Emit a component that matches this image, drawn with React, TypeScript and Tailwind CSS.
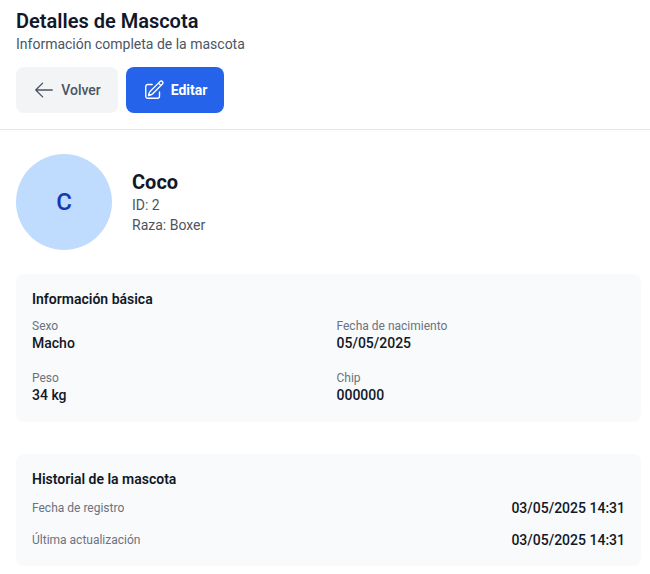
import { HiOutlineArrowLeft, HiOutlinePencilSquare } from "react-icons/hi2"

function Field({ label, value }: { label: string; value: string }) {
  return (
    <div>
      <p className="text-xs leading-4 text-[#6b7280]">{label}</p>
      <p className="-mt-px text-sm leading-5 font-medium text-[#111827]">{value}</p>
    </div>
  )
}

function HistoryRow({ label, value }: { label: string; value: string }) {
  return (
    <div className="flex items-center justify-between">
      <span className="text-xs leading-4 text-[#6b7280]">{label}</span>
      <span className="text-sm leading-5 font-medium text-[#111827]">{value}</span>
    </div>
  )
}

export default function App() {
  return (
    <div className="h-[574px] w-[650px] overflow-hidden bg-white font-['Roboto',sans-serif]">
      <div className="border-b border-[#e5e7eb] px-4 pt-2.5 pb-4">
        <h1 className="text-xl leading-[23px] font-semibold text-[#111827]">Detalles de Mascota</h1>
        <p className="mt-px text-sm leading-5 text-[#4b5563]">Información completa de la mascota</p>
        <div className="mt-[13px] flex gap-2">
          <button className="flex h-[46px] w-[102px] items-center justify-center gap-[6px] rounded-lg bg-[#f3f4f6] text-sm font-medium text-[#4b5563]">
            <HiOutlineArrowLeft className="h-[22px] w-[22px]" />
            Volver
          </button>
          <button className="flex h-[46px] w-[98px] items-center justify-center gap-[6px] rounded-lg bg-[#2563eb] text-sm font-bold text-white">
            <HiOutlinePencilSquare className="h-[22px] w-[22px]" />
            Editar
          </button>
        </div>
      </div>

      <div className="pt-6 pr-[9px] pl-4">
        <div className="flex items-center gap-5">
          <div className="flex h-24 w-24 items-center justify-center rounded-full bg-[#bfdbfe] text-2xl font-medium text-[#1438b4]">C</div>
          <div className="mb-0.5">
            <h2 className="text-xl leading-7 font-bold text-[#111827]">Coco</h2>
            <p className="-mt-px text-sm leading-5 text-[#4b5563]">ID: 2</p>
            <p className="text-sm leading-5 text-[#4b5563]">Raza: Boxer</p>
          </div>
        </div>

        <div className="mt-6 h-[148px] rounded-lg bg-[#f9fafb] px-4 pt-[15px]">
          <h3 className="text-sm leading-5 font-semibold text-[#111827]">Información básica</h3>
          <div className="mt-[9px] grid grid-cols-2 gap-x-4 gap-y-[17px]">
            <Field label="Sexo" value="Macho" />
            <Field label="Fecha de nacimiento" value="05/05/2025" />
            <Field label="Peso" value="34 kg" />
            <Field label="Chip" value="000000" />
          </div>
        </div>

        <div className="mt-8 h-28 rounded-lg bg-[#f9fafb] px-4 pt-[15px]">
          <h3 className="text-sm leading-5 font-semibold text-[#111827]">Historial de la mascota</h3>
          <div className="mt-[9px] flex flex-col gap-3">
            <HistoryRow label="Fecha de registro" value="03/05/2025 14:31" />
            <HistoryRow label="Última actualización" value="03/05/2025 14:31" />
          </div>
        </div>
      </div>
    </div>
  )
}
